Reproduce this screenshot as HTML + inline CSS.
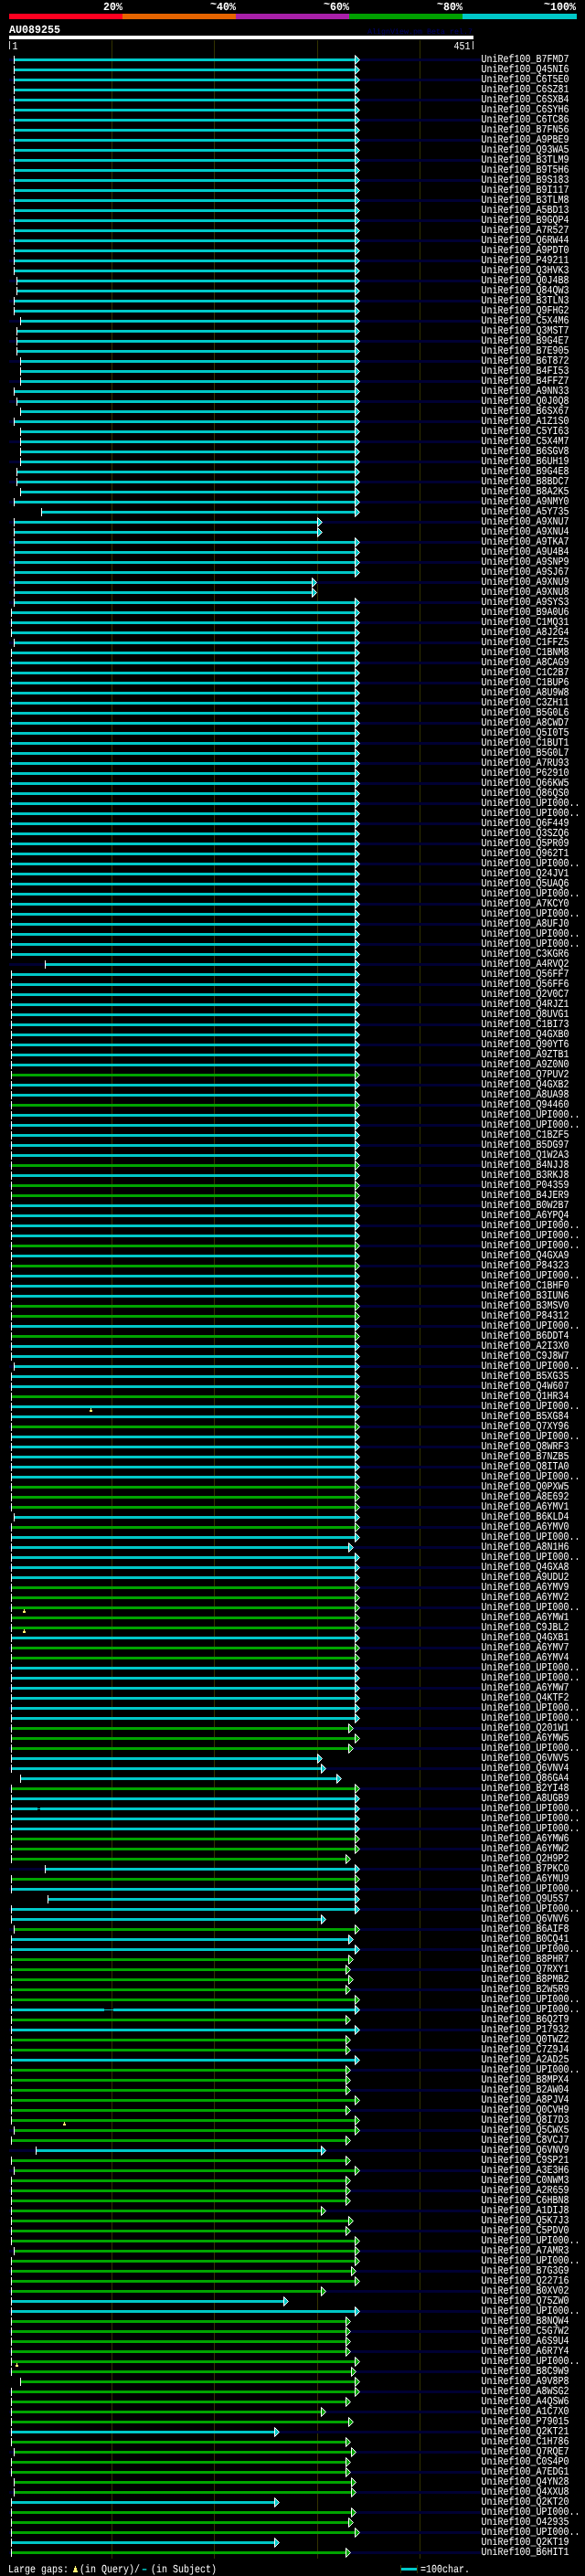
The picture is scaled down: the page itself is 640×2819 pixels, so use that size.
<!DOCTYPE html>
<html lang="en"><head><meta charset="utf-8"><title>AlignView AU089255</title>
<style>
html,body{margin:0;padding:0;background:#000;}
#w{-webkit-font-smoothing:antialiased;text-rendering:geometricPrecision;position:relative;width:640px;height:2819px;overflow:hidden;background:#000;font-family:"Liberation Mono",monospace;color:#fff;}
#w svg{position:absolute;left:0;top:0;display:block;}
.t,.b,.y,#l{will-change:transform;}
.t{position:absolute;white-space:pre;font-size:10px;line-height:10px;height:10px;transform:scaleY(1.222222);transform-origin:0 0;}
.b{position:absolute;white-space:pre;font-size:11.6667px;line-height:13px;font-weight:bold;transform:scaleY(1.05);transform-origin:0 0;}
.y{position:absolute;white-space:pre;font-size:8.3333px;line-height:8px;color:#000070;}
#l{position:absolute;left:526px;padding-left:.5px;top:61px;margin:0;transform:scaleY(1.222222);transform-origin:0 0;}
#l div{height:9px;line-height:9px;font-size:10px;white-space:pre;}
</style></head><body><div id="w">
<svg width="640" height="2819" viewBox="0 0 640 2819" shape-rendering="crispEdges">
<rect width="640" height="2819" fill="#000"/>
<rect x="10" y="15" width="124" height="6" fill="#ff0020"/>
<rect x="134" y="15" width="124" height="6" fill="#e66400"/>
<rect x="258" y="15" width="124" height="6" fill="#a820a8"/>
<rect x="382" y="15" width="124" height="6" fill="#00a000"/>
<rect x="506" y="15" width="125" height="6" fill="#00c8c8"/>
<rect x="10" y="39" width="508" height="4" fill="#fff"/>
<rect x="122" y="44" width="1" height="2756" fill="#333300"/>
<rect x="234" y="44" width="1" height="2756" fill="#333300"/>
<rect x="347" y="44" width="1" height="2756" fill="#333300"/>
<rect x="459" y="44" width="1" height="2756" fill="#333300"/>
<path d="M10 64h5v3h-5zM389 64h137v3h-137zM10 86h5v3h-5zM389 86h137v3h-137zM10 108h5v3h-5zM389 108h137v3h-137zM10 130h5v3h-5zM389 130h137v3h-137zM10 152h5v3h-5zM389 152h137v3h-137zM10 174h5v3h-5zM389 174h137v3h-137zM10 196h5v3h-5zM389 196h137v3h-137zM10 218h5v3h-5zM389 218h137v3h-137zM10 240h5v3h-5zM389 240h137v3h-137zM10 262h5v3h-5zM389 262h137v3h-137zM10 284h5v3h-5zM389 284h137v3h-137zM10 306h8v3h-8zM389 306h137v3h-137zM10 328h5v3h-5zM389 328h137v3h-137zM10 350h12v3h-12zM389 350h137v3h-137zM10 372h8v3h-8zM389 372h137v3h-137zM10 394h12v3h-12zM389 394h137v3h-137zM10 416h12v3h-12zM389 416h137v3h-137zM10 438h8v3h-8zM389 438h137v3h-137zM10 460h5v3h-5zM389 460h137v3h-137zM10 482h12v3h-12zM389 482h137v3h-137zM10 504h12v3h-12zM389 504h137v3h-137zM10 526h8v3h-8zM389 526h137v3h-137zM10 548h5v3h-5zM389 548h137v3h-137zM10 570h5v3h-5zM348 570h178v3h-178zM10 592h5v3h-5zM389 592h137v3h-137zM10 614h5v3h-5zM389 614h137v3h-137zM10 636h5v3h-5zM342 636h184v3h-184zM10 658h5v3h-5zM389 658h137v3h-137zM10 680h2v3h-2zM389 680h137v3h-137zM10 702h5v3h-5zM389 702h137v3h-137zM10 724h2v3h-2zM389 724h137v3h-137zM10 746h2v3h-2zM389 746h137v3h-137zM10 768h2v3h-2zM389 768h137v3h-137zM10 790h2v3h-2zM389 790h137v3h-137zM10 812h2v3h-2zM389 812h137v3h-137zM10 834h2v3h-2zM389 834h137v3h-137zM10 856h2v3h-2zM389 856h137v3h-137zM10 878h2v3h-2zM389 878h137v3h-137zM10 900h2v3h-2zM389 900h137v3h-137zM10 922h2v3h-2zM389 922h137v3h-137zM10 944h2v3h-2zM389 944h137v3h-137zM10 966h2v3h-2zM389 966h137v3h-137zM10 988h2v3h-2zM389 988h137v3h-137zM10 1010h2v3h-2zM389 1010h137v3h-137zM10 1032h2v3h-2zM389 1032h137v3h-137zM10 1054h39v3h-39zM389 1054h137v3h-137zM10 1076h2v3h-2zM389 1076h137v3h-137zM10 1098h2v3h-2zM389 1098h137v3h-137zM10 1120h2v3h-2zM389 1120h137v3h-137zM10 1142h2v3h-2zM389 1142h137v3h-137zM10 1164h2v3h-2zM389 1164h137v3h-137zM10 1186h2v3h-2zM389 1186h137v3h-137zM10 1208h2v3h-2zM389 1208h137v3h-137zM10 1230h2v3h-2zM389 1230h137v3h-137zM10 1252h2v3h-2zM389 1252h137v3h-137zM10 1274h2v3h-2zM389 1274h137v3h-137zM10 1296h2v3h-2zM389 1296h137v3h-137zM10 1318h2v3h-2zM389 1318h137v3h-137zM10 1340h2v3h-2zM389 1340h137v3h-137zM10 1362h2v3h-2zM389 1362h137v3h-137zM10 1384h2v3h-2zM389 1384h137v3h-137zM10 1406h2v3h-2zM389 1406h137v3h-137zM10 1428h2v3h-2zM389 1428h137v3h-137zM10 1450h2v3h-2zM389 1450h137v3h-137zM10 1472h2v3h-2zM389 1472h137v3h-137zM10 1494h5v3h-5zM389 1494h137v3h-137zM10 1516h2v3h-2zM389 1516h137v3h-137zM10 1538h2v3h-2zM389 1538h137v3h-137zM10 1560h2v3h-2zM389 1560h137v3h-137zM10 1582h2v3h-2zM389 1582h137v3h-137zM10 1604h2v3h-2zM389 1604h137v3h-137zM10 1626h2v3h-2zM389 1626h137v3h-137zM10 1648h2v3h-2zM389 1648h137v3h-137zM10 1670h2v3h-2zM389 1670h137v3h-137zM10 1692h2v3h-2zM382 1692h144v3h-144zM10 1714h2v3h-2zM389 1714h137v3h-137zM10 1736h2v3h-2zM389 1736h137v3h-137zM10 1758h2v3h-2zM389 1758h137v3h-137zM10 1780h2v3h-2zM389 1780h137v3h-137zM10 1802h2v3h-2zM389 1802h137v3h-137zM10 1824h2v3h-2zM389 1824h137v3h-137zM10 1846h2v3h-2zM389 1846h137v3h-137zM10 1868h2v3h-2zM389 1868h137v3h-137zM10 1890h2v3h-2zM382 1890h144v3h-144zM10 1912h2v3h-2zM382 1912h144v3h-144zM10 1934h2v3h-2zM352 1934h174v3h-174zM10 1956h2v3h-2zM389 1956h137v3h-137zM10 1978h2v3h-2zM389 1978h137v3h-137zM10 2000h2v3h-2zM389 2000h137v3h-137zM10 2022h2v3h-2zM389 2022h137v3h-137zM10 2044h39v3h-39zM389 2044h137v3h-137zM10 2066h2v3h-2zM389 2066h137v3h-137zM10 2088h2v3h-2zM389 2088h137v3h-137zM10 2110h5v3h-5zM389 2110h137v3h-137zM10 2132h2v3h-2zM389 2132h137v3h-137zM10 2154h2v3h-2zM379 2154h147v3h-147zM10 2176h2v3h-2zM379 2176h147v3h-147zM10 2198h2v3h-2zM389 2198h137v3h-137zM10 2220h2v3h-2zM389 2220h137v3h-137zM10 2242h2v3h-2zM379 2242h147v3h-147zM10 2264h2v3h-2zM379 2264h147v3h-147zM10 2286h2v3h-2zM379 2286h147v3h-147zM10 2308h2v3h-2zM379 2308h147v3h-147zM10 2330h5v3h-5zM389 2330h137v3h-137zM10 2352h29v3h-29zM352 2352h174v3h-174zM10 2374h5v3h-5zM389 2374h137v3h-137zM10 2396h2v3h-2zM379 2396h147v3h-147zM10 2418h2v3h-2zM352 2418h174v3h-174zM10 2440h2v3h-2zM379 2440h147v3h-147zM10 2462h5v3h-5zM389 2462h137v3h-137zM10 2484h2v3h-2zM385 2484h141v3h-141zM10 2506h2v3h-2zM352 2506h174v3h-174zM10 2528h2v3h-2zM389 2528h137v3h-137zM10 2550h2v3h-2zM379 2550h147v3h-147zM10 2572h2v3h-2zM379 2572h147v3h-147zM10 2594h2v3h-2zM385 2594h141v3h-141zM10 2616h2v3h-2zM389 2616h137v3h-137zM10 2638h2v3h-2zM352 2638h174v3h-174zM10 2660h2v3h-2zM301 2660h225v3h-225zM10 2682h5v3h-5zM385 2682h141v3h-141zM10 2704h2v3h-2zM379 2704h147v3h-147zM10 2726h5v3h-5zM385 2726h141v3h-141zM10 2748h2v3h-2zM385 2748h141v3h-141zM10 2770h2v3h-2zM389 2770h137v3h-137zM10 2792h2v3h-2zM379 2792h147v3h-147z" fill="#000033"/>
<path d="M16 64h372v3h-372zM16 75h372v3h-372zM16 86h372v3h-372zM16 97h372v3h-372zM16 108h372v3h-372zM16 119h372v3h-372zM16 130h372v3h-372zM16 141h372v3h-372zM16 152h372v3h-372zM16 163h372v3h-372zM16 174h372v3h-372zM16 185h372v3h-372zM16 196h372v3h-372zM16 207h372v3h-372zM16 218h372v3h-372zM16 229h372v3h-372zM16 240h372v3h-372zM16 251h372v3h-372zM16 262h372v3h-372zM16 273h372v3h-372zM16 284h372v3h-372zM16 295h372v3h-372zM19 306h369v3h-369zM19 317h369v3h-369zM16 328h372v3h-372zM16 339h372v3h-372zM23 350h365v3h-365zM19 361h369v3h-369zM19 372h369v3h-369zM19 383h369v3h-369zM23 394h365v3h-365zM23 405h365v3h-365zM23 416h365v3h-365zM16 427h372v3h-372zM19 438h369v3h-369zM23 449h365v3h-365zM16 460h372v3h-372zM23 471h365v3h-365zM23 482h365v3h-365zM23 493h365v3h-365zM23 504h365v3h-365zM19 515h369v3h-369zM19 526h369v3h-369zM23 537h365v3h-365zM16 548h372v3h-372zM46 559h342v3h-342zM16 570h331v3h-331zM16 581h331v3h-331zM16 592h372v3h-372zM16 603h372v3h-372zM16 614h372v3h-372zM16 625h372v3h-372zM16 636h325v3h-325zM16 647h325v3h-325zM16 658h372v3h-372zM13 669h375v3h-375zM13 680h375v3h-375zM13 691h375v3h-375zM16 702h372v3h-372zM13 713h375v3h-375zM13 724h375v3h-375zM13 735h375v3h-375zM13 746h375v3h-375zM13 757h375v3h-375zM13 768h375v3h-375zM13 779h375v3h-375zM13 790h375v3h-375zM13 801h375v3h-375zM13 812h375v3h-375zM13 823h375v3h-375zM13 834h375v3h-375zM13 845h375v3h-375zM13 856h375v3h-375zM13 867h375v3h-375zM13 878h375v3h-375zM13 889h375v3h-375zM13 900h375v3h-375zM13 911h375v3h-375zM13 922h375v3h-375zM13 933h375v3h-375zM13 944h375v3h-375zM13 955h375v3h-375zM13 966h375v3h-375zM13 977h375v3h-375zM13 988h375v3h-375zM13 999h375v3h-375zM13 1010h375v3h-375zM13 1021h375v3h-375zM13 1032h375v3h-375zM13 1043h375v3h-375zM50 1054h338v3h-338zM13 1065h375v3h-375zM13 1076h375v3h-375zM13 1087h375v3h-375zM13 1098h375v3h-375zM13 1109h375v3h-375zM13 1120h375v3h-375zM13 1131h375v3h-375zM13 1142h375v3h-375zM13 1153h375v3h-375zM13 1164h375v3h-375zM13 1186h375v3h-375zM13 1197h375v3h-375zM13 1219h375v3h-375zM13 1230h375v3h-375zM13 1241h375v3h-375zM13 1252h375v3h-375zM13 1263h375v3h-375zM13 1285h375v3h-375zM13 1318h375v3h-375zM13 1329h375v3h-375zM13 1340h375v3h-375zM13 1351h375v3h-375zM13 1373h375v3h-375zM13 1395h375v3h-375zM13 1406h375v3h-375zM13 1417h375v3h-375zM13 1450h375v3h-375zM13 1472h375v3h-375zM13 1483h375v3h-375zM16 1494h372v3h-372zM13 1505h375v3h-375zM13 1516h375v3h-375zM13 1538h375v3h-375zM13 1549h375v3h-375zM13 1571h375v3h-375zM13 1582h375v3h-375zM13 1593h375v3h-375zM13 1604h375v3h-375zM13 1615h375v3h-375zM16 1659h372v3h-372zM13 1681h375v3h-375zM13 1692h368v3h-368zM13 1703h375v3h-375zM13 1714h375v3h-375zM13 1725h375v3h-375zM13 1791h375v3h-375zM13 1824h375v3h-375zM13 1835h375v3h-375zM13 1846h375v3h-375zM13 1857h375v3h-375zM13 1868h375v3h-375zM13 1879h375v3h-375zM13 1923h334v3h-334zM13 1934h338v3h-338zM23 1945h345v3h-345zM13 1967h375v3h-375zM13 1978h28v1h3v-1h344v3h-344v-1h-3v1h-28zM13 1989h375v3h-375zM13 2000h375v3h-375zM50 2044h338v3h-338zM13 2066h375v3h-375zM53 2077h335v3h-335zM13 2088h375v3h-375zM13 2099h338v3h-338zM13 2121h368v3h-368zM13 2132h375v3h-375zM13 2198h101v1h10v-1h264v3h-264v-1h-10v1h-101zM13 2220h375v3h-375zM13 2253h375v3h-375zM40 2352h311v3h-311zM13 2517h297v3h-297zM13 2528h375v3h-375zM13 2660h287v3h-287zM13 2737h287v3h-287zM13 2781h287v3h-287z" fill="#00c8c8"/>
<path d="M388.5 60.5l5 5l-5 5zM388.5 71.5l5 5l-5 5zM388.5 82.5l5 5l-5 5zM388.5 93.5l5 5l-5 5zM388.5 104.5l5 5l-5 5zM388.5 115.5l5 5l-5 5zM388.5 126.5l5 5l-5 5zM388.5 137.5l5 5l-5 5zM388.5 148.5l5 5l-5 5zM388.5 159.5l5 5l-5 5zM388.5 170.5l5 5l-5 5zM388.5 181.5l5 5l-5 5zM388.5 192.5l5 5l-5 5zM388.5 203.5l5 5l-5 5zM388.5 214.5l5 5l-5 5zM388.5 225.5l5 5l-5 5zM388.5 236.5l5 5l-5 5zM388.5 247.5l5 5l-5 5zM388.5 258.5l5 5l-5 5zM388.5 269.5l5 5l-5 5zM388.5 280.5l5 5l-5 5zM388.5 291.5l5 5l-5 5zM388.5 302.5l5 5l-5 5zM388.5 313.5l5 5l-5 5zM388.5 324.5l5 5l-5 5zM388.5 335.5l5 5l-5 5zM388.5 346.5l5 5l-5 5zM388.5 357.5l5 5l-5 5zM388.5 368.5l5 5l-5 5zM388.5 379.5l5 5l-5 5zM388.5 390.5l5 5l-5 5zM388.5 401.5l5 5l-5 5zM388.5 412.5l5 5l-5 5zM388.5 423.5l5 5l-5 5zM388.5 434.5l5 5l-5 5zM388.5 445.5l5 5l-5 5zM388.5 456.5l5 5l-5 5zM388.5 467.5l5 5l-5 5zM388.5 478.5l5 5l-5 5zM388.5 489.5l5 5l-5 5zM388.5 500.5l5 5l-5 5zM388.5 511.5l5 5l-5 5zM388.5 522.5l5 5l-5 5zM388.5 533.5l5 5l-5 5zM388.5 544.5l5 5l-5 5zM388.5 555.5l5 5l-5 5zM347.5 566.5l5 5l-5 5zM347.5 577.5l5 5l-5 5zM388.5 588.5l5 5l-5 5zM388.5 599.5l5 5l-5 5zM388.5 610.5l5 5l-5 5zM388.5 621.5l5 5l-5 5zM341.5 632.5l5 5l-5 5zM341.5 643.5l5 5l-5 5zM388.5 654.5l5 5l-5 5zM388.5 665.5l5 5l-5 5zM388.5 676.5l5 5l-5 5zM388.5 687.5l5 5l-5 5zM388.5 698.5l5 5l-5 5zM388.5 709.5l5 5l-5 5zM388.5 720.5l5 5l-5 5zM388.5 731.5l5 5l-5 5zM388.5 742.5l5 5l-5 5zM388.5 753.5l5 5l-5 5zM388.5 764.5l5 5l-5 5zM388.5 775.5l5 5l-5 5zM388.5 786.5l5 5l-5 5zM388.5 797.5l5 5l-5 5zM388.5 808.5l5 5l-5 5zM388.5 819.5l5 5l-5 5zM388.5 830.5l5 5l-5 5zM388.5 841.5l5 5l-5 5zM388.5 852.5l5 5l-5 5zM388.5 863.5l5 5l-5 5zM388.5 874.5l5 5l-5 5zM388.5 885.5l5 5l-5 5zM388.5 896.5l5 5l-5 5zM388.5 907.5l5 5l-5 5zM388.5 918.5l5 5l-5 5zM388.5 929.5l5 5l-5 5zM388.5 940.5l5 5l-5 5zM388.5 951.5l5 5l-5 5zM388.5 962.5l5 5l-5 5zM388.5 973.5l5 5l-5 5zM388.5 984.5l5 5l-5 5zM388.5 995.5l5 5l-5 5zM388.5 1006.5l5 5l-5 5zM388.5 1017.5l5 5l-5 5zM388.5 1028.5l5 5l-5 5zM388.5 1039.5l5 5l-5 5zM388.5 1050.5l5 5l-5 5zM388.5 1061.5l5 5l-5 5zM388.5 1072.5l5 5l-5 5zM388.5 1083.5l5 5l-5 5zM388.5 1094.5l5 5l-5 5zM388.5 1105.5l5 5l-5 5zM388.5 1116.5l5 5l-5 5zM388.5 1127.5l5 5l-5 5zM388.5 1138.5l5 5l-5 5zM388.5 1149.5l5 5l-5 5zM388.5 1160.5l5 5l-5 5zM388.5 1182.5l5 5l-5 5zM388.5 1193.5l5 5l-5 5zM388.5 1215.5l5 5l-5 5zM388.5 1226.5l5 5l-5 5zM388.5 1237.5l5 5l-5 5zM388.5 1248.5l5 5l-5 5zM388.5 1259.5l5 5l-5 5zM388.5 1281.5l5 5l-5 5zM388.5 1314.5l5 5l-5 5zM388.5 1325.5l5 5l-5 5zM388.5 1336.5l5 5l-5 5zM388.5 1347.5l5 5l-5 5zM388.5 1369.5l5 5l-5 5zM388.5 1391.5l5 5l-5 5zM388.5 1402.5l5 5l-5 5zM388.5 1413.5l5 5l-5 5zM388.5 1446.5l5 5l-5 5zM388.5 1468.5l5 5l-5 5zM388.5 1479.5l5 5l-5 5zM388.5 1490.5l5 5l-5 5zM388.5 1501.5l5 5l-5 5zM388.5 1512.5l5 5l-5 5zM388.5 1534.5l5 5l-5 5zM388.5 1545.5l5 5l-5 5zM388.5 1567.5l5 5l-5 5zM388.5 1578.5l5 5l-5 5zM388.5 1589.5l5 5l-5 5zM388.5 1600.5l5 5l-5 5zM388.5 1611.5l5 5l-5 5zM388.5 1655.5l5 5l-5 5zM388.5 1677.5l5 5l-5 5zM381.5 1688.5l5 5l-5 5zM388.5 1699.5l5 5l-5 5zM388.5 1710.5l5 5l-5 5zM388.5 1721.5l5 5l-5 5zM388.5 1787.5l5 5l-5 5zM388.5 1820.5l5 5l-5 5zM388.5 1831.5l5 5l-5 5zM388.5 1842.5l5 5l-5 5zM388.5 1853.5l5 5l-5 5zM388.5 1864.5l5 5l-5 5zM388.5 1875.5l5 5l-5 5zM347.5 1919.5l5 5l-5 5zM351.5 1930.5l5 5l-5 5zM368.5 1941.5l5 5l-5 5zM388.5 1963.5l5 5l-5 5zM388.5 1974.5l5 5l-5 5zM388.5 1985.5l5 5l-5 5zM388.5 1996.5l5 5l-5 5zM388.5 2040.5l5 5l-5 5zM388.5 2062.5l5 5l-5 5zM388.5 2073.5l5 5l-5 5zM388.5 2084.5l5 5l-5 5zM351.5 2095.5l5 5l-5 5zM381.5 2117.5l5 5l-5 5zM388.5 2128.5l5 5l-5 5zM388.5 2194.5l5 5l-5 5zM388.5 2216.5l5 5l-5 5zM388.5 2249.5l5 5l-5 5zM351.5 2348.5l5 5l-5 5zM310.5 2513.5l5 5l-5 5zM388.5 2524.5l5 5l-5 5zM300.5 2656.5l5 5l-5 5zM300.5 2733.5l5 5l-5 5zM300.5 2777.5l5 5l-5 5z" fill="#00c8c8" stroke="#fff" stroke-width="1" shape-rendering="geometricPrecision"/>
<path d="M13 1175h375v3h-375zM13 1208h375v3h-375zM13 1274h375v3h-375zM13 1296h375v3h-375zM13 1307h375v3h-375zM13 1362h375v3h-375zM13 1384h375v3h-375zM13 1428h375v3h-375zM13 1439h375v3h-375zM13 1461h375v3h-375zM13 1527h375v3h-375zM13 1560h375v3h-375zM13 1626h375v3h-375zM13 1637h375v3h-375zM13 1648h375v3h-375zM13 1670h375v3h-375zM13 1736h375v3h-375zM13 1747h375v3h-375zM13 1758h375v3h-375zM13 1769h375v3h-375zM13 1780h375v3h-375zM13 1802h375v3h-375zM13 1813h375v3h-375zM13 1890h368v3h-368zM13 1901h375v3h-375zM13 1912h368v3h-368zM13 1956h375v3h-375zM13 2011h375v3h-375zM13 2022h375v3h-375zM13 2033h365v3h-365zM13 2055h375v3h-375zM16 2110h372v3h-372zM13 2143h368v3h-368zM13 2154h365v3h-365zM13 2165h368v3h-368zM13 2176h365v3h-365zM13 2187h375v3h-375zM13 2209h365v3h-365zM13 2231h365v3h-365zM13 2242h365v3h-365zM13 2264h365v3h-365zM13 2275h365v3h-365zM13 2286h365v3h-365zM13 2297h375v3h-375zM13 2308h365v3h-365zM13 2319h375v3h-375zM16 2330h372v3h-372zM13 2341h365v3h-365zM13 2363h365v3h-365zM16 2374h372v3h-372zM13 2385h365v3h-365zM13 2396h365v3h-365zM13 2407h365v3h-365zM13 2418h338v3h-338zM13 2429h368v3h-368zM13 2440h365v3h-365zM13 2451h375v3h-375zM16 2462h372v3h-372zM13 2473h375v3h-375zM13 2484h371v3h-371zM13 2495h375v3h-375zM13 2506h338v3h-338zM13 2539h365v3h-365zM13 2550h365v3h-365zM13 2561h365v3h-365zM13 2572h365v3h-365zM13 2583h375v3h-375zM13 2594h371v3h-371zM23 2605h365v3h-365zM13 2616h375v3h-375zM13 2627h365v3h-365zM13 2638h338v3h-338zM13 2649h368v3h-368zM13 2671h365v3h-365zM16 2682h368v3h-368zM13 2693h365v3h-365zM13 2704h365v3h-365zM16 2715h368v3h-368zM16 2726h368v3h-368zM13 2748h371v3h-371zM13 2759h368v3h-368zM13 2770h375v3h-375zM13 2792h365v3h-365z" fill="#00a400"/>
<path d="M388.5 1171.5l5 5l-5 5zM388.5 1204.5l5 5l-5 5zM388.5 1270.5l5 5l-5 5zM388.5 1292.5l5 5l-5 5zM388.5 1303.5l5 5l-5 5zM388.5 1358.5l5 5l-5 5zM388.5 1380.5l5 5l-5 5zM388.5 1424.5l5 5l-5 5zM388.5 1435.5l5 5l-5 5zM388.5 1457.5l5 5l-5 5zM388.5 1523.5l5 5l-5 5zM388.5 1556.5l5 5l-5 5zM388.5 1622.5l5 5l-5 5zM388.5 1633.5l5 5l-5 5zM388.5 1644.5l5 5l-5 5zM388.5 1666.5l5 5l-5 5zM388.5 1732.5l5 5l-5 5zM388.5 1743.5l5 5l-5 5zM388.5 1754.5l5 5l-5 5zM388.5 1765.5l5 5l-5 5zM388.5 1776.5l5 5l-5 5zM388.5 1798.5l5 5l-5 5zM388.5 1809.5l5 5l-5 5zM381.5 1886.5l5 5l-5 5zM388.5 1897.5l5 5l-5 5zM381.5 1908.5l5 5l-5 5zM388.5 1952.5l5 5l-5 5zM388.5 2007.5l5 5l-5 5zM388.5 2018.5l5 5l-5 5zM378.5 2029.5l5 5l-5 5zM388.5 2051.5l5 5l-5 5zM388.5 2106.5l5 5l-5 5zM381.5 2139.5l5 5l-5 5zM378.5 2150.5l5 5l-5 5zM381.5 2161.5l5 5l-5 5zM378.5 2172.5l5 5l-5 5zM388.5 2183.5l5 5l-5 5zM378.5 2205.5l5 5l-5 5zM378.5 2227.5l5 5l-5 5zM378.5 2238.5l5 5l-5 5zM378.5 2260.5l5 5l-5 5zM378.5 2271.5l5 5l-5 5zM378.5 2282.5l5 5l-5 5zM388.5 2293.5l5 5l-5 5zM378.5 2304.5l5 5l-5 5zM388.5 2315.5l5 5l-5 5zM388.5 2326.5l5 5l-5 5zM378.5 2337.5l5 5l-5 5zM378.5 2359.5l5 5l-5 5zM388.5 2370.5l5 5l-5 5zM378.5 2381.5l5 5l-5 5zM378.5 2392.5l5 5l-5 5zM378.5 2403.5l5 5l-5 5zM351.5 2414.5l5 5l-5 5zM381.5 2425.5l5 5l-5 5zM378.5 2436.5l5 5l-5 5zM388.5 2447.5l5 5l-5 5zM388.5 2458.5l5 5l-5 5zM388.5 2469.5l5 5l-5 5zM384.5 2480.5l5 5l-5 5zM388.5 2491.5l5 5l-5 5zM351.5 2502.5l5 5l-5 5zM378.5 2535.5l5 5l-5 5zM378.5 2546.5l5 5l-5 5zM378.5 2557.5l5 5l-5 5zM378.5 2568.5l5 5l-5 5zM388.5 2579.5l5 5l-5 5zM384.5 2590.5l5 5l-5 5zM388.5 2601.5l5 5l-5 5zM388.5 2612.5l5 5l-5 5zM378.5 2623.5l5 5l-5 5zM351.5 2634.5l5 5l-5 5zM381.5 2645.5l5 5l-5 5zM378.5 2667.5l5 5l-5 5zM384.5 2678.5l5 5l-5 5zM378.5 2689.5l5 5l-5 5zM378.5 2700.5l5 5l-5 5zM384.5 2711.5l5 5l-5 5zM384.5 2722.5l5 5l-5 5zM384.5 2744.5l5 5l-5 5zM381.5 2755.5l5 5l-5 5zM388.5 2766.5l5 5l-5 5zM378.5 2788.5l5 5l-5 5z" fill="#00a400" stroke="#fff" stroke-width="1" shape-rendering="geometricPrecision"/>
<path d="M15 61h1v9h-1zM15 72h1v9h-1zM15 83h1v9h-1zM15 94h1v9h-1zM15 105h1v9h-1zM15 116h1v9h-1zM15 127h1v9h-1zM15 138h1v9h-1zM15 149h1v9h-1zM15 160h1v9h-1zM15 171h1v9h-1zM15 182h1v9h-1zM15 193h1v9h-1zM15 204h1v9h-1zM15 215h1v9h-1zM15 226h1v9h-1zM15 237h1v9h-1zM15 248h1v9h-1zM15 259h1v9h-1zM15 270h1v9h-1zM15 281h1v9h-1zM15 292h1v9h-1zM18 303h1v9h-1zM18 314h1v9h-1zM15 325h1v9h-1zM15 336h1v9h-1zM22 347h1v9h-1zM18 358h1v9h-1zM18 369h1v9h-1zM18 380h1v9h-1zM22 391h1v9h-1zM22 402h1v9h-1zM22 413h1v9h-1zM15 424h1v9h-1zM18 435h1v9h-1zM22 446h1v9h-1zM15 457h1v9h-1zM22 468h1v9h-1zM22 479h1v9h-1zM22 490h1v9h-1zM22 501h1v9h-1zM18 512h1v9h-1zM18 523h1v9h-1zM22 534h1v9h-1zM15 545h1v9h-1zM45 556h1v9h-1zM15 567h1v9h-1zM15 578h1v9h-1zM15 589h1v9h-1zM15 600h1v9h-1zM15 611h1v9h-1zM15 622h1v9h-1zM15 633h1v9h-1zM15 644h1v9h-1zM15 655h1v9h-1zM12 666h1v9h-1zM12 677h1v9h-1zM12 688h1v9h-1zM15 699h1v9h-1zM12 710h1v9h-1zM12 721h1v9h-1zM12 732h1v9h-1zM12 743h1v9h-1zM12 754h1v9h-1zM12 765h1v9h-1zM12 776h1v9h-1zM12 787h1v9h-1zM12 798h1v9h-1zM12 809h1v9h-1zM12 820h1v9h-1zM12 831h1v9h-1zM12 842h1v9h-1zM12 853h1v9h-1zM12 864h1v9h-1zM12 875h1v9h-1zM12 886h1v9h-1zM12 897h1v9h-1zM12 908h1v9h-1zM12 919h1v9h-1zM12 930h1v9h-1zM12 941h1v9h-1zM12 952h1v9h-1zM12 963h1v9h-1zM12 974h1v9h-1zM12 985h1v9h-1zM12 996h1v9h-1zM12 1007h1v9h-1zM12 1018h1v9h-1zM12 1029h1v9h-1zM12 1040h1v9h-1zM49 1051h1v9h-1zM12 1062h1v9h-1zM12 1073h1v9h-1zM12 1084h1v9h-1zM12 1095h1v9h-1zM12 1106h1v9h-1zM12 1117h1v9h-1zM12 1128h1v9h-1zM12 1139h1v9h-1zM12 1150h1v9h-1zM12 1161h1v9h-1zM12 1172h1v9h-1zM12 1183h1v9h-1zM12 1194h1v9h-1zM12 1205h1v9h-1zM12 1216h1v9h-1zM12 1227h1v9h-1zM12 1238h1v9h-1zM12 1249h1v9h-1zM12 1260h1v9h-1zM12 1271h1v9h-1zM12 1282h1v9h-1zM12 1293h1v9h-1zM12 1304h1v9h-1zM12 1315h1v9h-1zM12 1326h1v9h-1zM12 1337h1v9h-1zM12 1348h1v9h-1zM12 1359h1v9h-1zM12 1370h1v9h-1zM12 1381h1v9h-1zM12 1392h1v9h-1zM12 1403h1v9h-1zM12 1414h1v9h-1zM12 1425h1v9h-1zM12 1436h1v9h-1zM12 1447h1v9h-1zM12 1458h1v9h-1zM12 1469h1v9h-1zM12 1480h1v9h-1zM15 1491h1v9h-1zM12 1502h1v9h-1zM12 1513h1v9h-1zM12 1524h1v9h-1zM12 1535h1v9h-1zM12 1546h1v9h-1zM12 1557h1v9h-1zM12 1568h1v9h-1zM12 1579h1v9h-1zM12 1590h1v9h-1zM12 1601h1v9h-1zM12 1612h1v9h-1zM12 1623h1v9h-1zM12 1634h1v9h-1zM12 1645h1v9h-1zM15 1656h1v9h-1zM12 1667h1v9h-1zM12 1678h1v9h-1zM12 1689h1v9h-1zM12 1700h1v9h-1zM12 1711h1v9h-1zM12 1722h1v9h-1zM12 1733h1v9h-1zM12 1744h1v9h-1zM12 1755h1v9h-1zM12 1766h1v9h-1zM12 1777h1v9h-1zM12 1788h1v9h-1zM12 1799h1v9h-1zM12 1810h1v9h-1zM12 1821h1v9h-1zM12 1832h1v9h-1zM12 1843h1v9h-1zM12 1854h1v9h-1zM12 1865h1v9h-1zM12 1876h1v9h-1zM12 1887h1v9h-1zM12 1898h1v9h-1zM12 1909h1v9h-1zM12 1920h1v9h-1zM12 1931h1v9h-1zM22 1942h1v9h-1zM12 1953h1v9h-1zM12 1964h1v9h-1zM12 1975h1v9h-1zM12 1986h1v9h-1zM12 1997h1v9h-1zM12 2008h1v9h-1zM12 2019h1v9h-1zM12 2030h1v9h-1zM49 2041h1v9h-1zM12 2052h1v9h-1zM12 2063h1v9h-1zM52 2074h1v9h-1zM12 2085h1v9h-1zM12 2096h1v9h-1zM15 2107h1v9h-1zM12 2118h1v9h-1zM12 2129h1v9h-1zM12 2140h1v9h-1zM12 2151h1v9h-1zM12 2162h1v9h-1zM12 2173h1v9h-1zM12 2184h1v9h-1zM12 2195h1v9h-1zM12 2206h1v9h-1zM12 2217h1v9h-1zM12 2228h1v9h-1zM12 2239h1v9h-1zM12 2250h1v9h-1zM12 2261h1v9h-1zM12 2272h1v9h-1zM12 2283h1v9h-1zM12 2294h1v9h-1zM12 2305h1v9h-1zM12 2316h1v9h-1zM15 2327h1v9h-1zM12 2338h1v9h-1zM39 2349h1v9h-1zM12 2360h1v9h-1zM15 2371h1v9h-1zM12 2382h1v9h-1zM12 2393h1v9h-1zM12 2404h1v9h-1zM12 2415h1v9h-1zM12 2426h1v9h-1zM12 2437h1v9h-1zM12 2448h1v9h-1zM15 2459h1v9h-1zM12 2470h1v9h-1zM12 2481h1v9h-1zM12 2492h1v9h-1zM12 2503h1v9h-1zM12 2514h1v9h-1zM12 2525h1v9h-1zM12 2536h1v9h-1zM12 2547h1v9h-1zM12 2558h1v9h-1zM12 2569h1v9h-1zM12 2580h1v9h-1zM12 2591h1v9h-1zM22 2602h1v9h-1zM12 2613h1v9h-1zM12 2624h1v9h-1zM12 2635h1v9h-1zM12 2646h1v9h-1zM12 2657h1v9h-1zM12 2668h1v9h-1zM15 2679h1v9h-1zM12 2690h1v9h-1zM12 2701h1v9h-1zM15 2712h1v9h-1zM15 2723h1v9h-1zM12 2734h1v9h-1zM12 2745h1v9h-1zM12 2756h1v9h-1zM12 2767h1v9h-1zM12 2778h1v9h-1zM12 2789h1v9h-1z" fill="#fff"/>
<path d="M99 1541h1v2h-1zM98 1543h3v2h-3zM26 1761h1v2h-1zM25 1763h3v2h-3zM26 1783h1v2h-1zM25 1785h3v2h-3zM70 2322h1v2h-1zM69 2324h3v2h-3zM18 2586h1v2h-1zM17 2588h3v2h-3zM82 2808h1v2h-1zM81 2810h3v3h-3zM80 2813h5v2h-5z" fill="#fff070"/>
<rect x="438" y="2807" width="1" height="9" fill="#333300"/><rect x="456" y="2807" width="1" height="9" fill="#333300"/>
<rect x="439" y="2810" width="17" height="3" fill="#00c8c8"/>
</svg>
<div class="b" style="left:113px;top:2px">20%</div>
<div class="b" style="left:230px;top:2px"><span style="position:relative;top:-3px">~</span>40%</div>
<div class="b" style="left:354px;top:2px"><span style="position:relative;top:-3px">~</span>60%</div>
<div class="b" style="left:478px;top:2px"><span style="position:relative;top:-3px">~</span>80%</div>
<div class="b" style="left:595px;top:2px"><span style="position:relative;top:-3px">~</span>100%</div>
<div class="b" style="left:10px;top:27px">AU089255</div>
<div class="y" style="left:402px;top:31px">AlignView.pm Beta rel.7</div>
<div class="t" style="left:7px;padding-left:.5px;top:47px"><span style="display:inline-block;transform:translateY(-.8px) scaleY(.8);transform-origin:0 0">|</span>1</div>
<div class="t" style="left:496px;padding-left:.5px;top:47px">451<span style="display:inline-block;transform:translateY(-.8px) scaleY(.8);transform-origin:0 0">|</span></div>
<div id="l">
<div>UniRef100_B7FMD7</div>
<div>UniRef100_Q45NI6</div>
<div>UniRef100_C6T5E0</div>
<div>UniRef100_C6SZ81</div>
<div>UniRef100_C6SXB4</div>
<div>UniRef100_C6SYH6</div>
<div>UniRef100_C6TC86</div>
<div>UniRef100_B7FN56</div>
<div>UniRef100_A9PBE9</div>
<div>UniRef100_Q93WA5</div>
<div>UniRef100_B3TLM9</div>
<div>UniRef100_B9T5H6</div>
<div>UniRef100_B9S183</div>
<div>UniRef100_B9I117</div>
<div>UniRef100_B3TLM8</div>
<div>UniRef100_A5BD13</div>
<div>UniRef100_B9GQP4</div>
<div>UniRef100_A7R527</div>
<div>UniRef100_Q6RW44</div>
<div>UniRef100_A9PDT0</div>
<div>UniRef100_P49211</div>
<div>UniRef100_Q3HVK3</div>
<div>UniRef100_Q0J4B8</div>
<div>UniRef100_Q84QW3</div>
<div>UniRef100_B3TLN3</div>
<div>UniRef100_Q9FHG2</div>
<div>UniRef100_C5X4M6</div>
<div>UniRef100_Q3MST7</div>
<div>UniRef100_B9G4E7</div>
<div>UniRef100_B7E905</div>
<div>UniRef100_B6T872</div>
<div>UniRef100_B4FI53</div>
<div>UniRef100_B4FFZ7</div>
<div>UniRef100_A9NN33</div>
<div>UniRef100_Q0J0Q8</div>
<div>UniRef100_B6SX67</div>
<div>UniRef100_A1Z1S0</div>
<div>UniRef100_C5YI63</div>
<div>UniRef100_C5X4M7</div>
<div>UniRef100_B6SGV8</div>
<div>UniRef100_B6UH19</div>
<div>UniRef100_B9G4E8</div>
<div>UniRef100_B8BDC7</div>
<div>UniRef100_B8A2K5</div>
<div>UniRef100_A9NMY0</div>
<div>UniRef100_A5Y735</div>
<div>UniRef100_A9XNU7</div>
<div>UniRef100_A9XNU4</div>
<div>UniRef100_A9TKA7</div>
<div>UniRef100_A9U4B4</div>
<div>UniRef100_A9SNP9</div>
<div>UniRef100_A9SJ67</div>
<div>UniRef100_A9XNU9</div>
<div>UniRef100_A9XNU8</div>
<div>UniRef100_A9SYS3</div>
<div>UniRef100_B9A0U6</div>
<div>UniRef100_C1MQ31</div>
<div>UniRef100_A8J2G4</div>
<div>UniRef100_C1FFZ5</div>
<div>UniRef100_C1BNM8</div>
<div>UniRef100_A8CAG9</div>
<div>UniRef100_C1C2B7</div>
<div>UniRef100_C1BUP6</div>
<div>UniRef100_A8U9W8</div>
<div>UniRef100_C3ZH11</div>
<div>UniRef100_B5G0L6</div>
<div>UniRef100_A8CWD7</div>
<div>UniRef100_Q5I0T5</div>
<div>UniRef100_C1BUT1</div>
<div>UniRef100_B5G0L7</div>
<div>UniRef100_A7RU93</div>
<div>UniRef100_P62910</div>
<div>UniRef100_Q66KW5</div>
<div>UniRef100_Q86QS0</div>
<div>UniRef100_UPI000..</div>
<div>UniRef100_UPI000..</div>
<div>UniRef100_Q6F449</div>
<div>UniRef100_Q3SZQ6</div>
<div>UniRef100_Q5PR09</div>
<div>UniRef100_Q962T1</div>
<div>UniRef100_UPI000..</div>
<div>UniRef100_Q24JV1</div>
<div>UniRef100_Q5UAQ6</div>
<div>UniRef100_UPI000..</div>
<div>UniRef100_A7KCY0</div>
<div>UniRef100_UPI000..</div>
<div>UniRef100_A8UFJ0</div>
<div>UniRef100_UPI000..</div>
<div>UniRef100_UPI000..</div>
<div>UniRef100_C3KGR6</div>
<div>UniRef100_A4RVQ2</div>
<div>UniRef100_Q56FF7</div>
<div>UniRef100_Q56FF6</div>
<div>UniRef100_Q2V0C7</div>
<div>UniRef100_Q4RJZ1</div>
<div>UniRef100_Q8UVG1</div>
<div>UniRef100_C1BI73</div>
<div>UniRef100_Q4GXB0</div>
<div>UniRef100_Q90YT6</div>
<div>UniRef100_A9ZTB1</div>
<div>UniRef100_A9Z0N0</div>
<div>UniRef100_Q7PUV2</div>
<div>UniRef100_Q4GXB2</div>
<div>UniRef100_A8UA98</div>
<div>UniRef100_Q94460</div>
<div>UniRef100_UPI000..</div>
<div>UniRef100_UPI000..</div>
<div>UniRef100_C1BZF5</div>
<div>UniRef100_B5DG97</div>
<div>UniRef100_Q1W2A3</div>
<div>UniRef100_B4NJJ8</div>
<div>UniRef100_B3RKJ8</div>
<div>UniRef100_P04359</div>
<div>UniRef100_B4JER9</div>
<div>UniRef100_B0W2B7</div>
<div>UniRef100_A6YPQ4</div>
<div>UniRef100_UPI000..</div>
<div>UniRef100_UPI000..</div>
<div>UniRef100_UPI000..</div>
<div>UniRef100_Q4GXA9</div>
<div>UniRef100_P84323</div>
<div>UniRef100_UPI000..</div>
<div>UniRef100_C1BHF0</div>
<div>UniRef100_B3IUN6</div>
<div>UniRef100_B3MSV0</div>
<div>UniRef100_P84312</div>
<div>UniRef100_UPI000..</div>
<div>UniRef100_B6DDT4</div>
<div>UniRef100_A2I3X0</div>
<div>UniRef100_C9J8W7</div>
<div>UniRef100_UPI000..</div>
<div>UniRef100_B5XG35</div>
<div>UniRef100_Q4W607</div>
<div>UniRef100_Q1HR34</div>
<div>UniRef100_UPI000..</div>
<div>UniRef100_B5XG84</div>
<div>UniRef100_Q7XY96</div>
<div>UniRef100_UPI000..</div>
<div>UniRef100_Q8WRF3</div>
<div>UniRef100_B7NZB5</div>
<div>UniRef100_Q8ITA0</div>
<div>UniRef100_UPI000..</div>
<div>UniRef100_Q0PXW5</div>
<div>UniRef100_A8E692</div>
<div>UniRef100_A6YMV1</div>
<div>UniRef100_B6KLD4</div>
<div>UniRef100_A6YMV0</div>
<div>UniRef100_UPI000..</div>
<div>UniRef100_A8N1H6</div>
<div>UniRef100_UPI000..</div>
<div>UniRef100_Q4GXA8</div>
<div>UniRef100_A9UDU2</div>
<div>UniRef100_A6YMV9</div>
<div>UniRef100_A6YMV2</div>
<div>UniRef100_UPI000..</div>
<div>UniRef100_A6YMW1</div>
<div>UniRef100_C9JBL2</div>
<div>UniRef100_Q4GXB1</div>
<div>UniRef100_A6YMV7</div>
<div>UniRef100_A6YMV4</div>
<div>UniRef100_UPI000..</div>
<div>UniRef100_UPI000..</div>
<div>UniRef100_A6YMW7</div>
<div>UniRef100_Q4KTF2</div>
<div>UniRef100_UPI000..</div>
<div>UniRef100_UPI000..</div>
<div>UniRef100_Q201W1</div>
<div>UniRef100_A6YMW5</div>
<div>UniRef100_UPI000..</div>
<div>UniRef100_Q6VNV5</div>
<div>UniRef100_Q6VNV4</div>
<div>UniRef100_Q86GA4</div>
<div>UniRef100_B2YI48</div>
<div>UniRef100_A8UGB9</div>
<div>UniRef100_UPI000..</div>
<div>UniRef100_UPI000..</div>
<div>UniRef100_UPI000..</div>
<div>UniRef100_A6YMW6</div>
<div>UniRef100_A6YMW2</div>
<div>UniRef100_Q2H9P2</div>
<div>UniRef100_B7PKC0</div>
<div>UniRef100_A6YMU9</div>
<div>UniRef100_UPI000..</div>
<div>UniRef100_Q9U5S7</div>
<div>UniRef100_UPI000..</div>
<div>UniRef100_Q6VNV6</div>
<div>UniRef100_B6AIF8</div>
<div>UniRef100_B0CQ41</div>
<div>UniRef100_UPI000..</div>
<div>UniRef100_B8PHR7</div>
<div>UniRef100_Q7RXY1</div>
<div>UniRef100_B8PMB2</div>
<div>UniRef100_B2W5R9</div>
<div>UniRef100_UPI000..</div>
<div>UniRef100_UPI000..</div>
<div>UniRef100_B6Q2T9</div>
<div>UniRef100_P17932</div>
<div>UniRef100_Q0TWZ2</div>
<div>UniRef100_C7Z9J4</div>
<div>UniRef100_A2AD25</div>
<div>UniRef100_UPI000..</div>
<div>UniRef100_B8MPX4</div>
<div>UniRef100_B2AW04</div>
<div>UniRef100_A8PJV4</div>
<div>UniRef100_Q0CVH9</div>
<div>UniRef100_Q8I7D3</div>
<div>UniRef100_Q5CWX5</div>
<div>UniRef100_C8VCJ7</div>
<div>UniRef100_Q6VNV9</div>
<div>UniRef100_C9SP21</div>
<div>UniRef100_A3E3H6</div>
<div>UniRef100_C0NWM3</div>
<div>UniRef100_A2R659</div>
<div>UniRef100_C6HBN8</div>
<div>UniRef100_A1DIJ8</div>
<div>UniRef100_Q5K7J3</div>
<div>UniRef100_C5PDV0</div>
<div>UniRef100_UPI000..</div>
<div>UniRef100_A7AMR3</div>
<div>UniRef100_UPI000..</div>
<div>UniRef100_B7G3G9</div>
<div>UniRef100_Q22716</div>
<div>UniRef100_B0XV02</div>
<div>UniRef100_Q75ZW0</div>
<div>UniRef100_UPI000..</div>
<div>UniRef100_B8NQW4</div>
<div>UniRef100_C5G7W2</div>
<div>UniRef100_A6S9U4</div>
<div>UniRef100_A6R7Y4</div>
<div>UniRef100_UPI000..</div>
<div>UniRef100_B8C9W9</div>
<div>UniRef100_A9V8P8</div>
<div>UniRef100_A8WSG2</div>
<div>UniRef100_A4QSW6</div>
<div>UniRef100_A1C7X0</div>
<div>UniRef100_P79015</div>
<div>UniRef100_Q2KT21</div>
<div>UniRef100_C1H786</div>
<div>UniRef100_Q7RQE7</div>
<div>UniRef100_C0S4P0</div>
<div>UniRef100_A7EDG1</div>
<div>UniRef100_Q4YN28</div>
<div>UniRef100_Q4XXU8</div>
<div>UniRef100_Q2KT20</div>
<div>UniRef100_UPI000..</div>
<div>UniRef100_O42935</div>
<div>UniRef100_UPI000..</div>
<div>UniRef100_Q2KT19</div>
<div>UniRef100_B6HIT1</div>
</div>
<div class="t" style="left:9px;top:2808px">Large gaps:  (in Query)/<span style="color:#00c8c8;display:inline-block;font-weight:bold;position:relative;left:1.5px;transform:scaleX(1.6)">-</span> (in Subject)</div>
<div class="t" style="left:460px;top:2808px">=100char.</div>
</div></body></html>
